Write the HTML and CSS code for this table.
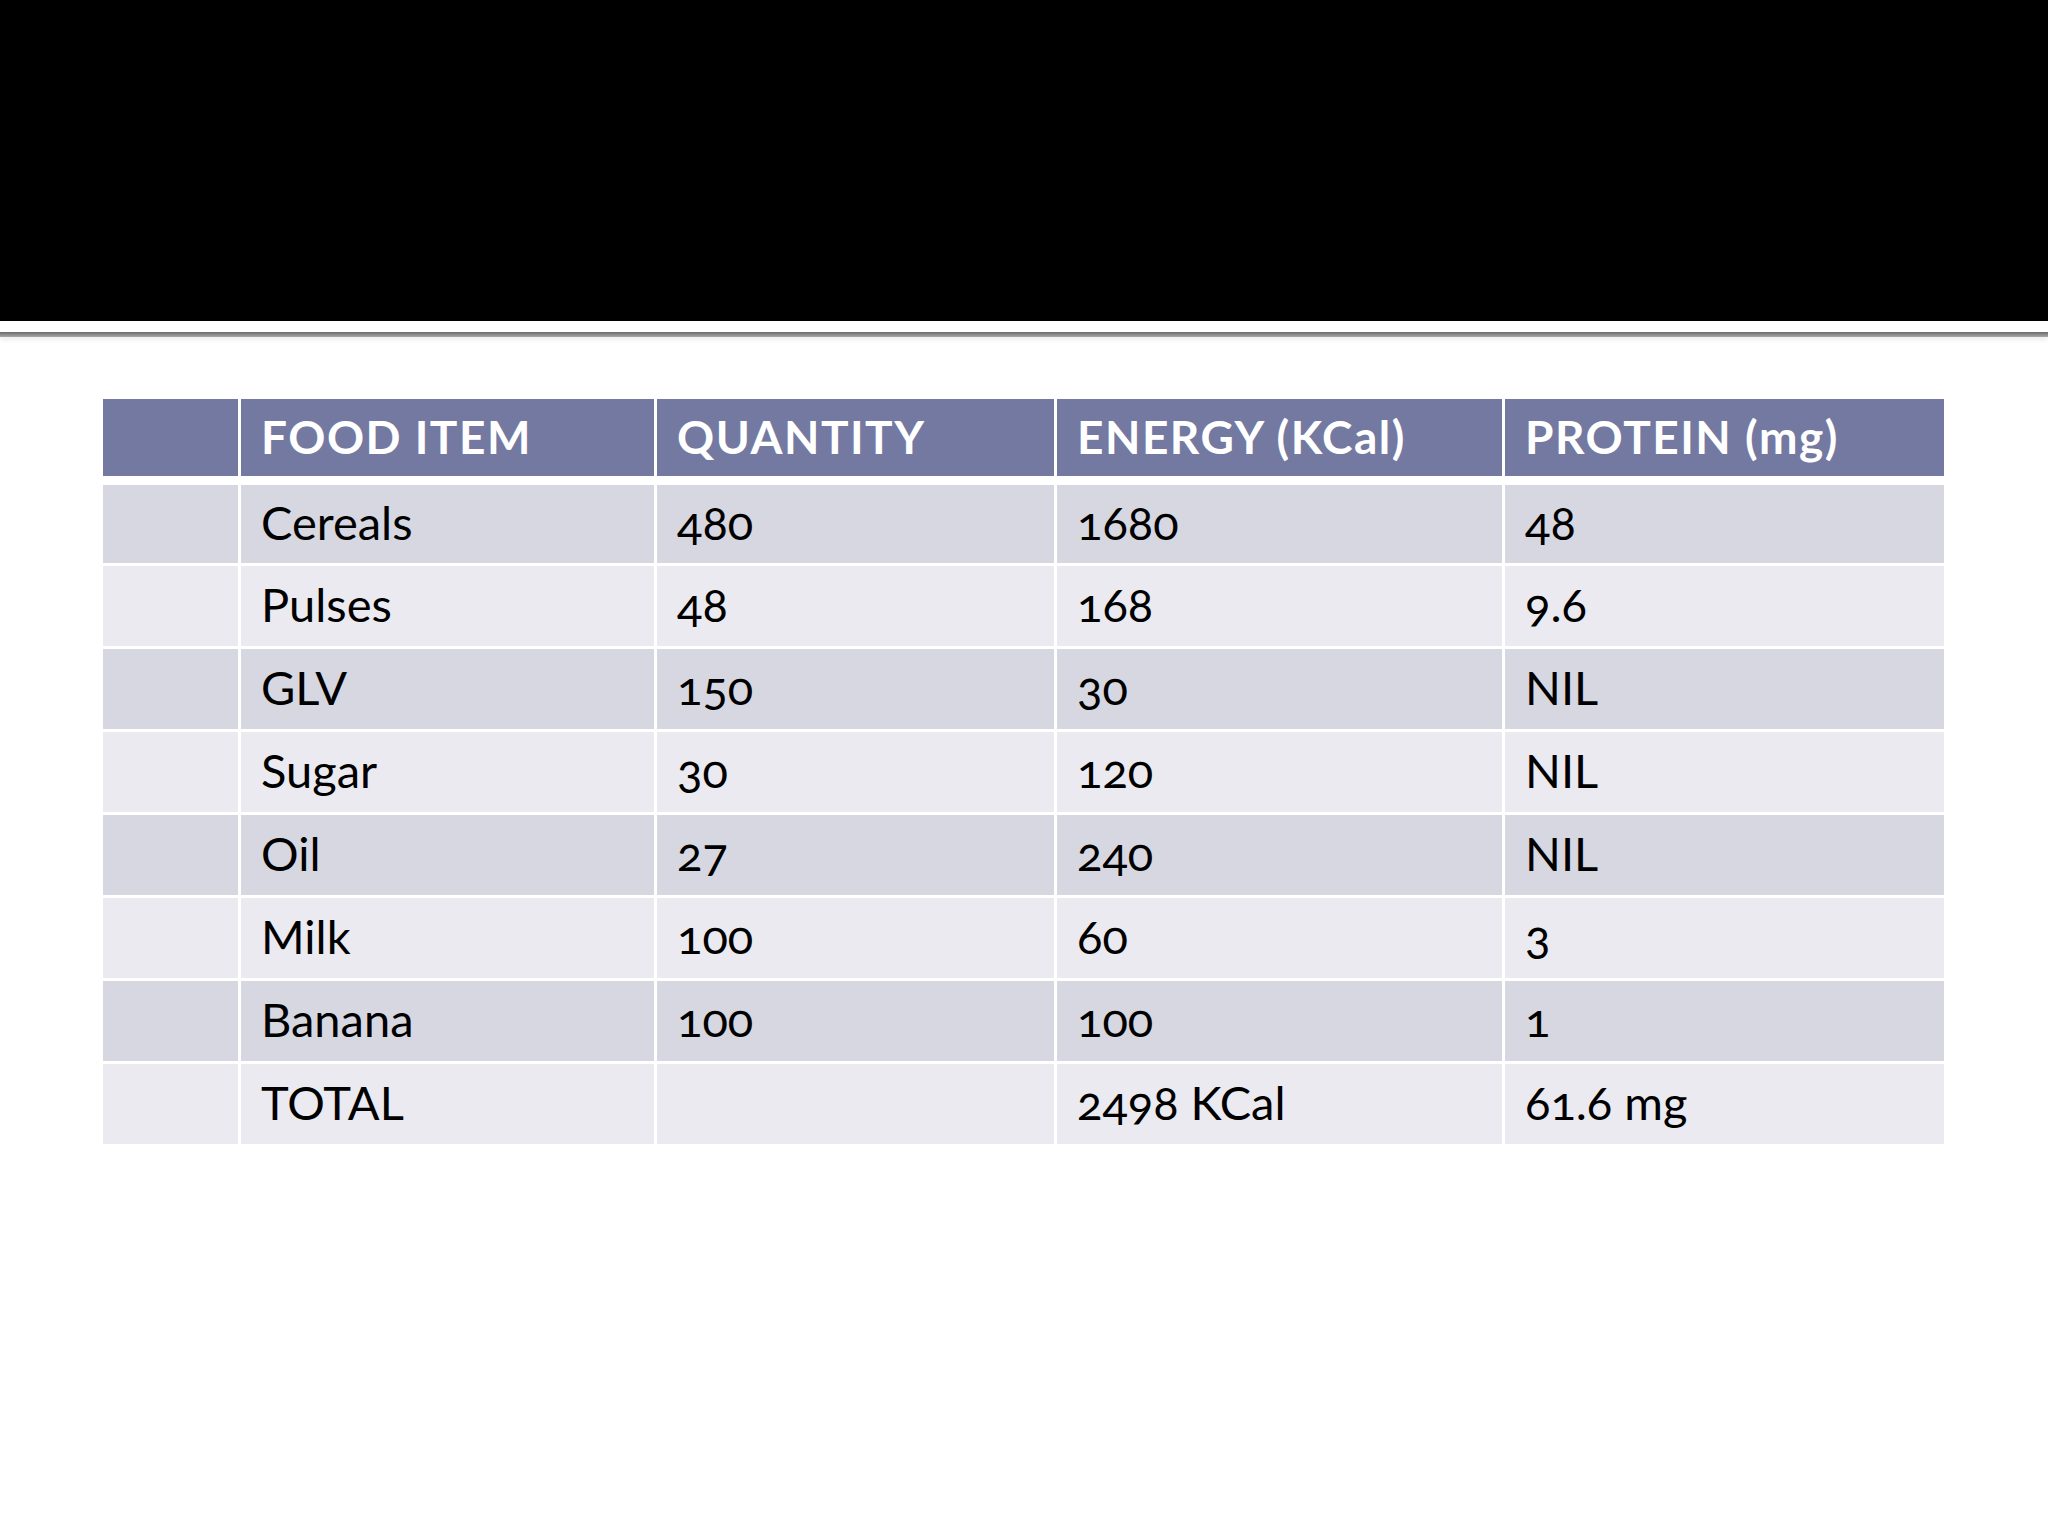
FILE: index.html
```html
<!DOCTYPE html>
<html lang="en">
<head>
<meta charset="utf-8">
<title>Food table</title>
<link rel="stylesheet" href="styles.css">
</head>
<body>
<div class="slide">
  <div class="title-band"></div>
  <div class="rule"></div>
  <div class="table">
    <div class="row head">
      <div class="cell"></div>
      <div class="cell">FOOD ITEM</div>
      <div class="cell">QUANTITY</div>
      <div class="cell">ENERGY (KCal)</div>
      <div class="cell">PROTEIN (mg)</div>
    </div>
    <div class="row dark first">
      <div class="cell"></div>
      <div class="cell">Cereals</div>
      <div class="cell">480</div>
      <div class="cell">1680</div>
      <div class="cell">48</div>
    </div>
    <div class="row light">
      <div class="cell"></div>
      <div class="cell">Pulses</div>
      <div class="cell">48</div>
      <div class="cell">168</div>
      <div class="cell">9.6</div>
    </div>
    <div class="row dark">
      <div class="cell"></div>
      <div class="cell">GLV</div>
      <div class="cell">150</div>
      <div class="cell">30</div>
      <div class="cell">NIL</div>
    </div>
    <div class="row light">
      <div class="cell"></div>
      <div class="cell">Sugar</div>
      <div class="cell">30</div>
      <div class="cell">120</div>
      <div class="cell">NIL</div>
    </div>
    <div class="row dark">
      <div class="cell"></div>
      <div class="cell">Oil</div>
      <div class="cell">27</div>
      <div class="cell">240</div>
      <div class="cell">NIL</div>
    </div>
    <div class="row light">
      <div class="cell"></div>
      <div class="cell">Milk</div>
      <div class="cell">100</div>
      <div class="cell">60</div>
      <div class="cell">3</div>
    </div>
    <div class="row dark">
      <div class="cell"></div>
      <div class="cell">Banana</div>
      <div class="cell">100</div>
      <div class="cell">100</div>
      <div class="cell">1</div>
    </div>
    <div class="row light">
      <div class="cell"></div>
      <div class="cell">TOTAL</div>
      <div class="cell"></div>
      <div class="cell">2498 KCal</div>
      <div class="cell">61.6 mg</div>
    </div>
  </div>
</div>
</body>
</html>
```

FILE: styles.css
```css
html, body {
  margin: 0;
  padding: 0;
  background: #ffffff;
}

.slide {
  width: 2048px;
  height: 1536px;
  background: #ffffff;
  overflow: hidden;
}

.title-band {
  height: 321px;
  background: #000000;
}

.rule {
  margin-top: 11px;
  height: 5px;
  background: linear-gradient(#6a6a6a, #a8a8a8);
  box-shadow: 0 3px 4px rgba(0, 0, 0, 0.08);
}

.table {
  margin: 62px 0 0 103px;
  width: 1841px;
  display: flex;
  flex-direction: column;
  gap: 3px;
  font-family: Lato, "Open Sans", sans-serif;
  font-size: 47px;
  font-variant-numeric: oldstyle-nums;
  font-feature-settings: "onum" 1;
}

.row {
  display: grid;
  grid-template-columns: 135px 413px 397px 445px 439px;
  column-gap: 3px;
  height: 80px;
}

.row.head {
  height: 77px;
  margin-bottom: 6px;
}

.row.first {
  height: 78px;
}

.cell {
  display: flex;
  align-items: center;
  padding-left: 20px;
  padding-bottom: 5px;
  box-sizing: border-box;
  color: #000000;
  white-space: nowrap;
}

.head .cell {
  background: #7479a1;
  color: #ffffff;
  font-weight: 700;
  font-size: 46px;
  letter-spacing: 1.5px;
  padding-bottom: 2px;
}

.dark .cell {
  background: #d6d7e0;
}

.light .cell {
  background: #eaeaf0;
}
```
